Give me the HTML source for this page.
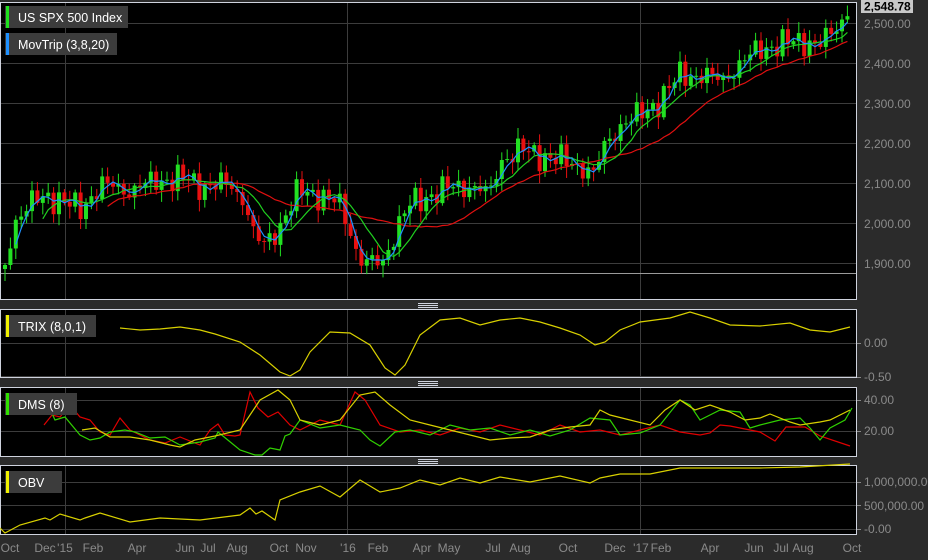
<!DOCTYPE html>
<html><head><meta charset="utf-8"><style>
html,body{margin:0;padding:0;background:#2b2b2b;width:928px;height:560px;overflow:hidden}
svg{display:block;font-family:"Liberation Sans",sans-serif}
</style></head><body>
<svg id="s" width="928" height="560" viewBox="0 0 928 560" xmlns="http://www.w3.org/2000/svg">
<rect x="0" y="0" width="928" height="560" fill="#2b2b2b"/>
<rect x="0.5" y="2.5" width="856" height="297" fill="#000" stroke="#cfd3de"/>
<rect x="0.5" y="309.5" width="856" height="68" fill="#000" stroke="#cfd3de"/>
<rect x="0.5" y="387.5" width="856" height="69" fill="#000" stroke="#cfd3de"/>
<rect x="0.5" y="465.5" width="856" height="69" fill="#000" stroke="#cfd3de"/>
<g stroke="#cfd3de" stroke-width="1">
<line x1="418" y1="303.5" x2="438" y2="303.5"/><line x1="418" y1="305.5" x2="438" y2="305.5"/><line x1="418" y1="307.5" x2="438" y2="307.5"/>
<line x1="418" y1="381.5" x2="438" y2="381.5"/><line x1="418" y1="383.5" x2="438" y2="383.5"/><line x1="418" y1="385.5" x2="438" y2="385.5"/>
<line x1="418" y1="459.5" x2="438" y2="459.5"/><line x1="418" y1="461.5" x2="438" y2="461.5"/><line x1="418" y1="463.5" x2="438" y2="463.5"/>
</g>
<g stroke="#3c3c3c" stroke-width="1">
<line x1="1" y1="23.5" x2="856" y2="23.5"/><line x1="1" y1="63.5" x2="856" y2="63.5"/><line x1="1" y1="103.5" x2="856" y2="103.5"/>
<line x1="1" y1="143.5" x2="856" y2="143.5"/><line x1="1" y1="183.5" x2="856" y2="183.5"/><line x1="1" y1="223.5" x2="856" y2="223.5"/>
<line x1="1" y1="263.5" x2="856" y2="263.5"/>
<line x1="1" y1="343.5" x2="856" y2="343.5"/><line x1="1" y1="376.5" x2="856" y2="376.5"/>
<line x1="1" y1="400.5" x2="856" y2="400.5"/><line x1="1" y1="431.5" x2="856" y2="431.5"/>
<line x1="1" y1="482.5" x2="856" y2="482.5"/><line x1="1" y1="505.5" x2="856" y2="505.5"/><line x1="1" y1="529.5" x2="856" y2="529.5"/>
<line x1="65.5" y1="3" x2="65.5" y2="299"/><line x1="65.5" y1="310" x2="65.5" y2="377"/><line x1="65.5" y1="388" x2="65.5" y2="456"/><line x1="65.5" y1="466" x2="65.5" y2="534"/>
<line x1="347.5" y1="3" x2="347.5" y2="299"/><line x1="347.5" y1="310" x2="347.5" y2="377"/><line x1="347.5" y1="388" x2="347.5" y2="456"/><line x1="347.5" y1="466" x2="347.5" y2="534"/>
<line x1="640.5" y1="3" x2="640.5" y2="299"/><line x1="640.5" y1="310" x2="640.5" y2="377"/><line x1="640.5" y1="388" x2="640.5" y2="456"/><line x1="640.5" y1="466" x2="640.5" y2="534"/>
</g>
<line x1="1" y1="273.5" x2="856" y2="273.5" stroke="#9a9a9a"/>
<g id="candles"></g>
<g id="mas" fill="none" stroke-width="1.2"></g>
<polyline fill="none" stroke="#d8d000" stroke-width="1.2" points="120,328 140,330 160,329 180,327 200,330 215,334 240,342 260,355 280,372 290,376 300,370 310,352 330,332 350,333 370,345 385,368 395,375 405,365 420,335 440,320 460,318 480,325 500,320 520,318 540,322 560,328 580,335 595,345 605,342 620,330 640,322 670,318 690,312 710,318 730,325 760,326 790,323 810,330 830,332 850,327"/>
<polyline fill="none" stroke="#e00000" stroke-width="1.2" points="44,425 52,415 60,417 70,405 80,417 90,420 100,432 110,435 120,418 130,430 150,440 165,443 180,437 200,445 210,430 218,424 225,435 235,436 240,435 250,392 258,408 268,417 278,412 290,425 300,430 320,420 340,425 355,392 365,400 380,425 400,432 420,430 440,435 460,428 480,432 500,425 520,430 540,435 560,425 580,432 600,430 620,435 640,430 660,425 680,432 700,435 710,433 720,425 730,426 740,428 760,432 770,438 775,441 786,427 805,427 820,436 850,446"/>
<polyline fill="none" stroke="#30d000" stroke-width="1.2" points="45,398 55,420 65,417 80,435 90,440 100,438 110,432 125,430 135,432 150,438 165,437 180,445 200,442 215,438 218,432 240,450 255,455 262,455 270,448 280,450 285,436 290,434 300,420 320,428 340,425 360,430 370,440 380,446 395,432 410,430 430,435 450,425 470,430 490,428 510,435 530,430 550,436 570,430 590,418 610,420 620,435 640,433 660,425 680,400 690,405 700,420 720,410 740,412 750,428 760,425 780,420 800,418 810,428 820,440 830,428 845,420 852,408"/>
<polyline fill="none" stroke="#d8d000" stroke-width="1.2" points="82,430 95,428 110,437 130,437 150,440 170,445 180,447 195,440 215,436 240,430 260,400 278,390 290,400 300,420 320,425 340,420 360,395 375,392 390,405 410,420 430,425 450,430 470,435 490,440 510,438 530,437 550,430 570,427 590,425 600,410 610,415 630,420 650,425 665,410 680,400 695,410 710,405 730,412 745,420 760,418 770,414 790,422 800,425 820,422 830,420 850,410"/>
<polyline fill="none" stroke="#d8d000" stroke-width="1.2" points="0,528 5,533 20,525 45,518 50,520 60,514 80,520 85,518 100,513 130,522 160,518 200,520 240,515 250,508 256,514 262,511 275,520 280,500 300,492 320,486 340,497 360,480 380,492 400,488 420,480 440,485 460,478 480,483 500,477 530,482 560,476 590,483 600,478 620,474 650,474 680,468 720,468 760,468 800,467 850,464"/>
<g font-size="12.5" fill="#fff">
<rect x="5" y="6" width="123" height="22" fill="#3c3c3c"/><rect x="6" y="6" width="3" height="22" fill="#1ee01e"/><text x="18" y="22">US SPX 500 Index</text>
<rect x="5" y="33" width="112" height="22" fill="#3c3c3c"/><rect x="6" y="33" width="3" height="22" fill="#1e90ff"/><text x="18" y="49">MovTrip (3,8,20)</text>
<rect x="5" y="315" width="91" height="22" fill="#3c3c3c"/><rect x="6" y="315" width="3" height="22" fill="#f0f000"/><text x="18" y="331">TRIX (8,0,1)</text>
<rect x="5" y="393" width="72" height="22" fill="#3c3c3c"/><rect x="6" y="393" width="3" height="22" fill="#30e000"/><text x="18" y="409">DMS (8)</text>
<rect x="5" y="471" width="57" height="22" fill="#3c3c3c"/><rect x="6" y="471" width="3" height="22" fill="#f0f000"/><text x="18" y="487">OBV</text>
</g>
<g font-size="12" fill="#8a8a8a">
<text x="864" y="28">2,500.00</text><text x="864" y="68">2,400.00</text><text x="864" y="108">2,300.00</text>
<text x="864" y="148">2,200.00</text><text x="864" y="188">2,100.00</text><text x="864" y="228">2,000.00</text><text x="864" y="268">1,900.00</text>
<text x="864" y="347">0.00</text><text x="864" y="381">-0.50</text>
<text x="864" y="404">40.00</text><text x="864" y="435">20.00</text>
<text x="864" y="486">1,000,000.00</text><text x="864" y="510">500,000.00</text><text x="864" y="533">-0.00</text>
</g>
<g stroke="#8a8a8a"><line x1="857" y1="343.5" x2="861" y2="343.5"/><line x1="857" y1="377.5" x2="861" y2="377.5"/><line x1="857" y1="400.5" x2="861" y2="400.5"/><line x1="857" y1="431.5" x2="861" y2="431.5"/><line x1="857" y1="482.5" x2="861" y2="482.5"/><line x1="857" y1="505.5" x2="861" y2="505.5"/><line x1="857" y1="529.5" x2="861" y2="529.5"/></g>
<rect x="861" y="0" width="52" height="13" fill="#c8c8c8"/>
<text x="864" y="10.5" font-size="12" font-weight="bold" fill="#000">2,548.78</text>
<g font-size="12" fill="#8a8a8a" text-anchor="middle">
<text x="10" y="552">Oct</text><text x="45" y="552">Dec</text><text x="65" y="552">'15</text><text x="93" y="552">Feb</text><text x="137" y="552">Apr</text><text x="185" y="552">Jun</text><text x="208" y="552">Jul</text><text x="237" y="552">Aug</text><text x="279" y="552">Oct</text><text x="306" y="552">Nov</text><text x="348" y="552">'16</text><text x="378" y="552">Feb</text><text x="422" y="552">Apr</text><text x="449" y="552">May</text><text x="493" y="552">Jul</text><text x="520" y="552">Aug</text><text x="568" y="552">Oct</text><text x="615" y="552">Dec</text><text x="641" y="552">'17</text><text x="661" y="552">Feb</text><text x="710" y="552">Apr</text><text x="754" y="552">Jun</text><text x="781" y="552">Jul</text><text x="803" y="552">Aug</text><text x="852" y="552">Oct</text>
</g>
</svg>
<script>
(function(){
var K=[[5,265],[15,220],[30,205],[45,195],[60,200],[80,210],[100,185],[130,190],[160,180],[180,178],[200,185],[230,185],[245,200],[255,240],[265,245],[280,225],[300,190],[320,195],[340,205],[350,230],[360,260],[375,265],[385,260],[395,230],[410,205],[440,190],[470,185],[490,195],[500,160],[520,150],[540,155],[560,160],[580,165],[595,175],[605,145],[620,125],[640,115],[660,100],[680,75],[700,75],[720,80],[740,65],[760,48],[780,45],[800,40],[820,45],[835,30],[850,6]];
function f(x){for(var i=0;i<K.length-1;i++){if(x<=K[i+1][0]){var a=K[i],b=K[i+1],t=(x-a[0])/(b[0]-a[0]);return a[1]+t*(b[1]-a[1]);}}return K[K.length-1][1];}
var NS="http://www.w3.org/2000/svg",g=document.getElementById('candles'),m=document.getElementById('mas');
var C=[],X=[],prev=f(5)+4;
for(var i=0;i<158;i++){var x=5+i*5.4;if(x>852)break;var c=f(x)+Math.sin(i*2.3)*8+Math.sin(i*0.9)*5+Math.sin(i*3.7)*4;if(x>848)c=6;
var o=prev;var up=c<o;var hi=Math.min(o,c)-2-Math.abs(Math.sin(i*1.7))*9,lo=Math.max(o,c)+2+Math.abs(Math.cos(i*1.3))*10;
var col=up?"#22e022":"#e81010";
var w=document.createElementNS(NS,'line');w.setAttribute('x1',x);w.setAttribute('x2',x);w.setAttribute('y1',hi);w.setAttribute('y2',lo);w.setAttribute('stroke',col);g.appendChild(w);
var r=document.createElementNS(NS,'rect');r.setAttribute('x',x-2);r.setAttribute('width',4);r.setAttribute('y',Math.min(o,c));r.setAttribute('height',Math.max(1,Math.abs(o-c)));r.setAttribute('fill',col);g.appendChild(r);
C.push(c);X.push(x);prev=c;}
function ma(n,col){var p=[];for(var i=n-1;i<C.length;i++){var s=0;for(var j=0;j<n;j++)s+=C[i-j];p.push(X[i]+","+(s/n).toFixed(1));}
var l=document.createElementNS(NS,'polyline');l.setAttribute('points',p.join(' '));l.setAttribute('stroke',col);m.appendChild(l);}
ma(20,"#e01010");ma(8,"#20d020");ma(3,"#2090ff");
})();
</script>
</body></html>
